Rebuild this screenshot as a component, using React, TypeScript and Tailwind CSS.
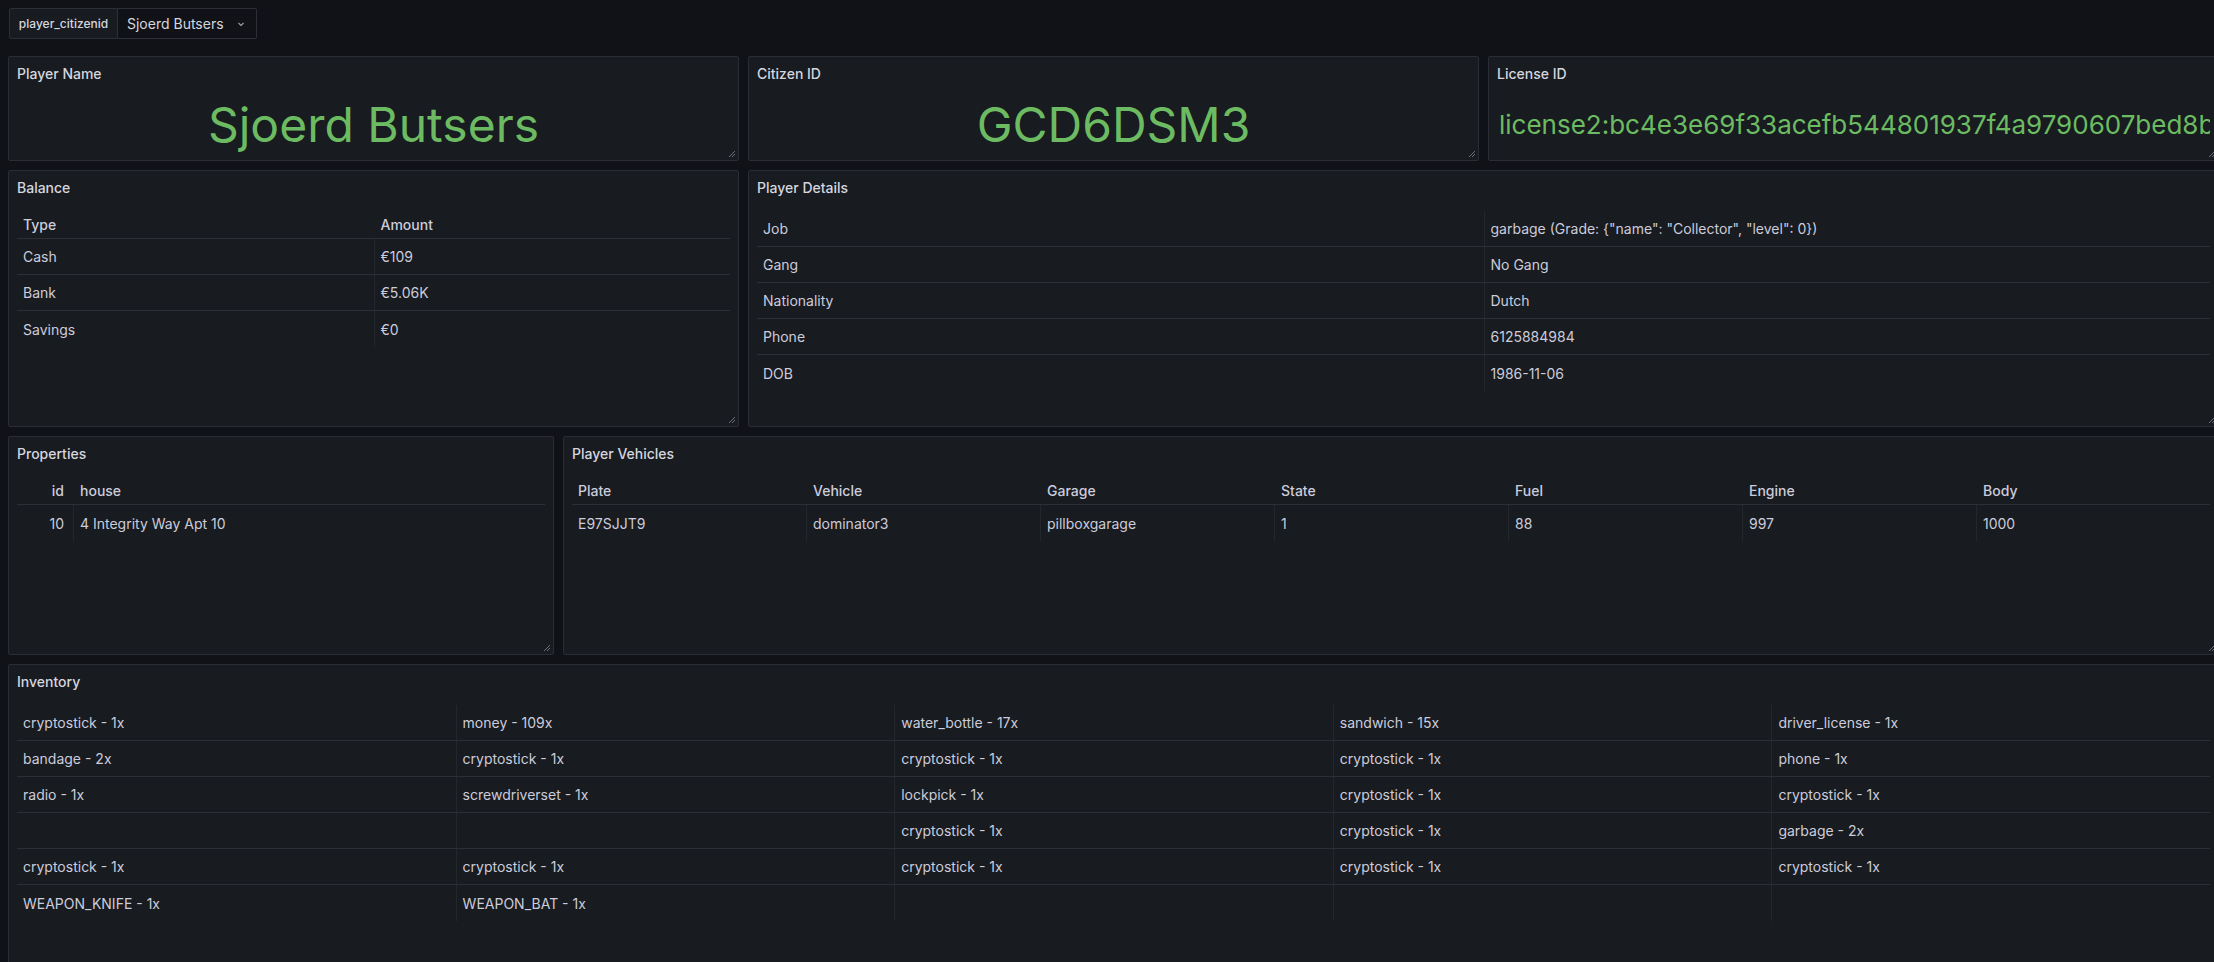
import React from "react";

const ResizeHandle = () => (
  <svg
    className="absolute bottom-[2px] right-[2px]"
    width="10"
    height="10"
    viewBox="0 0 10 10"
    fill="none"
  >
    <path d="M9 3 L3 9" stroke="#6e6f78" strokeWidth="1" />
    <path d="M9 6 L6 9" stroke="#6e6f78" strokeWidth="1" />
  </svg>
);

const Panel = ({
  title,
  children,
  className = "",
  bodyClass = "",
}: {
  title: string;
  children?: React.ReactNode;
  className?: string;
  bodyClass?: string;
}) => (
  <div
    className={`relative flex flex-col min-w-0 overflow-hidden rounded-[2px] border border-[#2a2d33] bg-[#181b1f] ${className}`}
  >
    <div className="flex h-[32px] shrink-0 items-center px-[8px] text-[14px] font-medium text-[#d5d6df]">
      {title}
    </div>
    <div className={`min-h-0 flex-1 px-[8px] pb-[8px] pt-[8px] ${bodyClass}`}>{children}</div>
    <ResizeHandle />
  </div>
);

const StatValue = ({ text }: { text: string }) => (
  <div className="flex h-full items-center justify-center">
    <span className="whitespace-nowrap text-[48px] leading-[1.15] text-[#6cbb62]">{text}</span>
  </div>
);

type TableProps = {
  headers?: string[];
  rows: string[][];
  cols: string;
  alignRight?: number[];
};

const DataTable = ({ headers, rows, cols, alignRight = [] }: TableProps) => (
  <div className="w-full text-[14px] text-[#ccccdc]">
    {headers && (
      <div
        className="grid h-[28px] items-center border-b border-[#2c2f35] font-medium"
        style={{ gridTemplateColumns: cols }}
      >
        {headers.map((h, i) => (
          <div
            key={i}
            className={`truncate px-[6px] ${i > 0 ? "pl-[7px]" : ""} ${
              alignRight.includes(i) ? "pr-[9px] text-right" : ""
            }`}
          >
            {h}
          </div>
        ))}
      </div>
    )}
    {rows.map((r, ri) => (
      <div
        key={ri}
        className={`grid h-[36px] ${ri < rows.length - 1 ? "border-b border-[#2c2f35]" : ""}`}
        style={{ gridTemplateColumns: cols }}
      >
        {r.map((c, ci) => (
          <div
            key={ci}
            className={`flex h-full items-center truncate px-[6px] ${
              ci > 0 ? "border-l border-[#24272c]" : ""
            } ${alignRight.includes(ci) ? "justify-end pr-[9px]" : ""}`}
          >
            {c}
          </div>
        ))}
      </div>
    ))}
  </div>
);

const inventory: string[][] = [
  ["cryptostick - 1x", "money - 109x", "water_bottle - 17x", "sandwich - 15x", "driver_license - 1x"],
  ["bandage - 2x", "cryptostick - 1x", "cryptostick - 1x", "cryptostick - 1x", "phone - 1x"],
  ["radio - 1x", "screwdriverset - 1x", "lockpick - 1x", "cryptostick - 1x", "cryptostick - 1x"],
  ["", "", "cryptostick - 1x", "cryptostick - 1x", "garbage - 2x"],
  ["cryptostick - 1x", "cryptostick - 1x", "cryptostick - 1x", "cryptostick - 1x", "cryptostick - 1x"],
  ["WEAPON_KNIFE - 1x", "WEAPON_BAT - 1x", "", "", ""],
];

export default function App() {
  return (
    <div className="h-[962px] w-[2214px] overflow-hidden bg-[#111217] font-[Inter,sans-serif] text-[#ccccdc]">
      <div className="w-[2211px] pl-[8px] box-content">
        {/* variable bar */}
        <div className="flex pl-[1px] pt-[8px]">
          <div className="flex h-[31px] items-stretch">
            <div className="flex w-[109px] items-center justify-center rounded-l-[2px] border border-[#2c2f35] bg-[#181b1f] text-[12px] font-medium text-[#d5d6df]">
              player_citizenid
            </div>
            <div className="flex w-[139px] items-center gap-[12px] rounded-r-[2px] border border-l-0 border-[#2c2f35] bg-[#111217] pl-[9px] text-[14px] text-[#d5d6df]">
              <span>Sjoerd Butsers</span>
              <svg width="10" height="10" viewBox="0 0 10 10" fill="none">
                <path d="M2.5 4 L5 6.5 L7.5 4" stroke="#9fa0a8" strokeWidth="1.1" />
              </svg>
            </div>
          </div>
        </div>

        <div className="mt-[17px] flex flex-col gap-[9px]">
          {/* row 1 */}
          <div className="grid h-[105px] grid-cols-3 gap-[9px]">
            <Panel title="Player Name">
              <StatValue text="Sjoerd Butsers" />
            </Panel>
            <Panel title="Citizen ID">
              <StatValue text="GCD6DSM3" />
            </Panel>
            <Panel title="License ID" bodyClass="pl-[10px]">
              <div className="flex h-full items-center overflow-hidden">
                <span className="whitespace-nowrap text-[26px] leading-[1.2] text-[#6cbb62]">
                  license2:bc4e3e69f33acefb544801937f4a9790607bed8b
                </span>
              </div>
            </Panel>
          </div>

          {/* row 2 */}
          <div className="grid h-[257px] grid-cols-[731px_1fr] gap-[9px]">
            <Panel title="Balance">
              <DataTable
                headers={["Type", "Amount"]}
                cols="1fr 1fr"
                rows={[
                  ["Cash", "€109"],
                  ["Bank", "€5.06K"],
                  ["Savings", "€0"],
                ]}
              />
            </Panel>
            <Panel title="Player Details">
              <DataTable
                cols="1fr 1fr"
                rows={[
                  ["Job", 'garbage (Grade: {"name": "Collector", "level": 0})'],
                  ["Gang", "No Gang"],
                  ["Nationality", "Dutch"],
                  ["Phone", "6125884984"],
                  ["DOB", "1986-11-06"],
                ]}
              />
            </Panel>
          </div>

          {/* row 3 */}
          <div className="grid h-[219px] grid-cols-[546px_1fr] gap-[9px]">
            <Panel title="Properties">
              <DataTable
                headers={["id", "house"]}
                cols="56px 1fr"
                alignRight={[0]}
                rows={[["10", "4 Integrity Way Apt 10"]]}
              />
            </Panel>
            <Panel title="Player Vehicles">
              <DataTable
                headers={["Plate", "Vehicle", "Garage", "State", "Fuel", "Engine", "Body"]}
                cols="repeat(7, 1fr)"
                rows={[["E97SJJT9", "dominator3", "pillboxgarage", "1", "88", "997", "1000"]]}
              />
            </Panel>
          </div>

          {/* row 4 */}
          <div className="h-[320px]">
            <Panel title="Inventory" className="h-full">
              <DataTable cols="repeat(5, 1fr)" rows={inventory} />
            </Panel>
          </div>
        </div>
      </div>
    </div>
  );
}
